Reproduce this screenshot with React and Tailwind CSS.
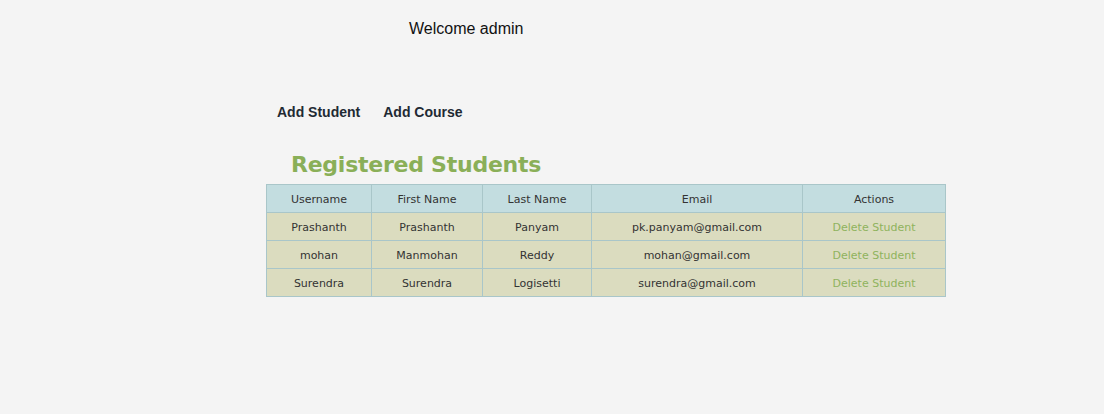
export default function App() {
  const students = [
    { username: "Prashanth", first: "Prashanth", last: "Panyam", email: "pk.panyam@gmail.com" },
    { username: "mohan", first: "Manmohan", last: "Reddy", email: "mohan@gmail.com" },
    { username: "Surendra", first: "Surendra", last: "Logisetti", email: "surendra@gmail.com" },
  ];

  const cell = "border border-[#a9c6c9] pt-[3px] text-center font-normal";

  return (
    <div className="min-h-[414px] bg-[#f4f4f4] font-['Liberation_Sans',Arial,sans-serif] text-[#111]">
      <div className="pl-[409px] pt-[19px] text-[16px] leading-[20px]">Welcome admin</div>

      <div className="flex gap-[23px] pl-[277px] pt-[64px] text-[14px] font-bold leading-[18px] text-[#1f2a33]">
        <a>Add Student</a>
        <a>Add Course</a>
      </div>

      <h2 className="pl-[291px] pt-[30px] font-['DejaVu_Sans',Verdana,sans-serif] text-[22px] font-bold leading-[28px] tracking-[-0.25px] text-[#8aaf58]">
        Registered Students
      </h2>

      <div className="pl-[266px] pt-[5px]">
        <table className="w-[679px] table-fixed border-collapse font-['DejaVu_Sans',Verdana,sans-serif] text-[11px] text-[#333]">
          <colgroup>
            <col className="w-[105px]" />
            <col className="w-[111px]" />
            <col className="w-[109px]" />
            <col className="w-[211px]" />
            <col className="w-[143px]" />
          </colgroup>
          <thead>
            <tr className="h-[28px] bg-[#c3dde0]">
              <th className={cell}>Username</th>
              <th className={cell}>First Name</th>
              <th className={cell}>Last Name</th>
              <th className={cell}>Email</th>
              <th className={cell}>Actions</th>
            </tr>
          </thead>
          <tbody>
            {students.map((s) => (
              <tr key={s.username} className="h-[28px] bg-[#dbdcbf]">
                <td className={cell}>{s.username}</td>
                <td className={cell}>{s.first}</td>
                <td className={cell}>{s.last}</td>
                <td className={cell}>{s.email}</td>
                <td className={cell}>
                  <a className="text-[#8fb35d]">Delete Student</a>
                </td>
              </tr>
            ))}
          </tbody>
        </table>
      </div>
    </div>
  );
}
